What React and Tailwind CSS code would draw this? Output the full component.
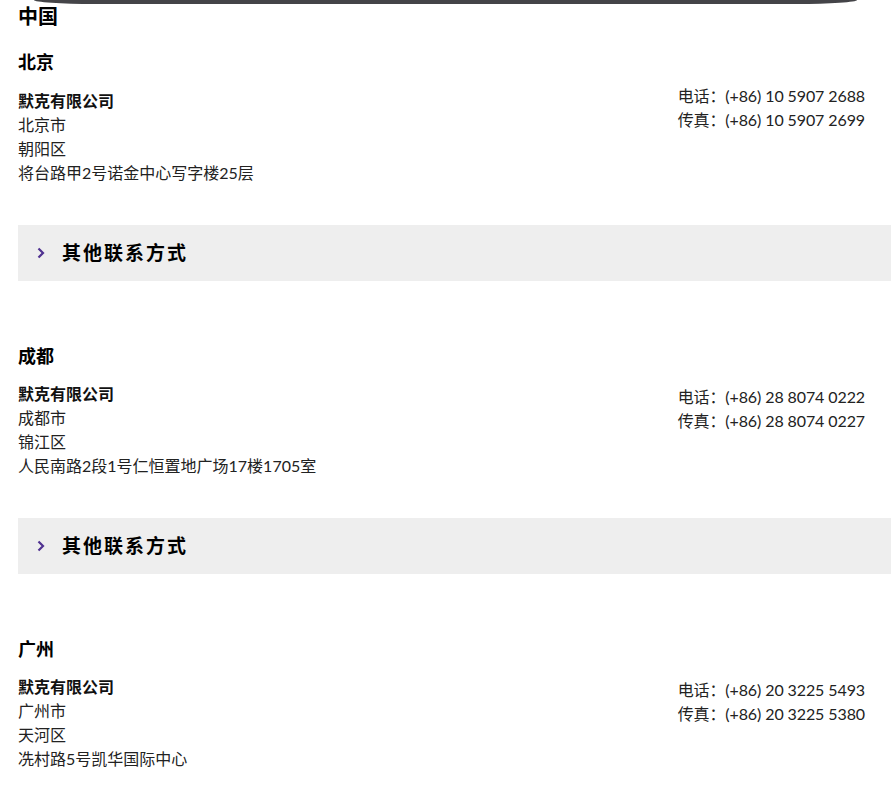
import React from 'react';

const offices = [
  {
    city: '北京',
    lines: ['北京市', '朝阳区', '将台路甲2号诺金中心写字楼25层'],
    tel: '(+86) 10 5907 2688',
    fax: '(+86) 10 5907 2699',
    more: true,
    phoneHigh: true,
  },
  {
    city: '成都',
    lines: ['成都市', '锦江区', '人民南路2段1号仁恒置地广场17楼1705室'],
    tel: '(+86) 28 8074 0222',
    fax: '(+86) 28 8074 0227',
    more: true,
    phoneHigh: false,
  },
  {
    city: '广州',
    lines: ['广州市', '天河区', '冼村路5号凯华国际中心'],
    tel: '(+86) 20 3225 5493',
    fax: '(+86) 20 3225 5380',
    more: false,
    phoneHigh: false,
  },
];

function Office({ office }) {
  return (
    <section>
      <h3 className="px-[18px] text-[18px] leading-[24px] font-bold text-black">{office.city}</h3>
      <div
        className={
          office.phoneHigh
            ? 'mt-[10px] flex justify-between pl-[18px] pr-[26px]'
            : 'mt-[14px] flex justify-between pl-[18px] pr-[26px]'
        }
      >
        <div className={office.phoneHigh ? 'pt-[5px]' : ''}>
          <p className="font-bold text-[16px] leading-[24px] text-[#111]">默克有限公司</p>
          {office.lines.map((l) => (
            <p key={l} className="text-[16px] leading-[24px] text-[#222]">{l}</p>
          ))}
        </div>
        <div
          className={
            office.phoneHigh
              ? 'text-[16px] leading-[24px] tracking-[-0.1px] text-[#222]'
              : 'pt-[3px] text-[16px] leading-[24px] tracking-[-0.1px] text-[#222]'
          }
        >
          <p>电话：{office.tel}</p>
          <p>传真：{office.fax}</p>
        </div>
      </div>
      {office.more && (
        <div className="ml-[18px] mt-[40px] mb-[63px] flex h-[56px] items-center bg-[#eeeeee]">
          <svg className="ml-[19px] h-[12px] w-[8px]" viewBox="0 0 8 12" fill="none">
            <polyline points="1.5,1.5 6,6 1.5,10.5" stroke="#503291" strokeWidth="2.2" />
          </svg>
          <span className="ml-[17px] text-[19px] font-bold tracking-[2px] text-black">其他联系方式</span>
        </div>
      )}
    </section>
  );
}

export default function App() {
  return (
    <div
      className="min-h-screen bg-white"
      style={{ fontFamily: 'Lato, "Noto Sans CJK SC", sans-serif' }}
    >
      <div className="mx-[34px] h-[4px] rounded-b-[60px_4px] bg-[#444448]" />
      <h2 className="px-[18px] text-[20px] leading-[24px] font-bold text-black">中国</h2>
      <div className="mt-[22px]">
        {offices.map((o) => (
          <Office key={o.city} office={o} />
        ))}
      </div>
    </div>
  );
}
